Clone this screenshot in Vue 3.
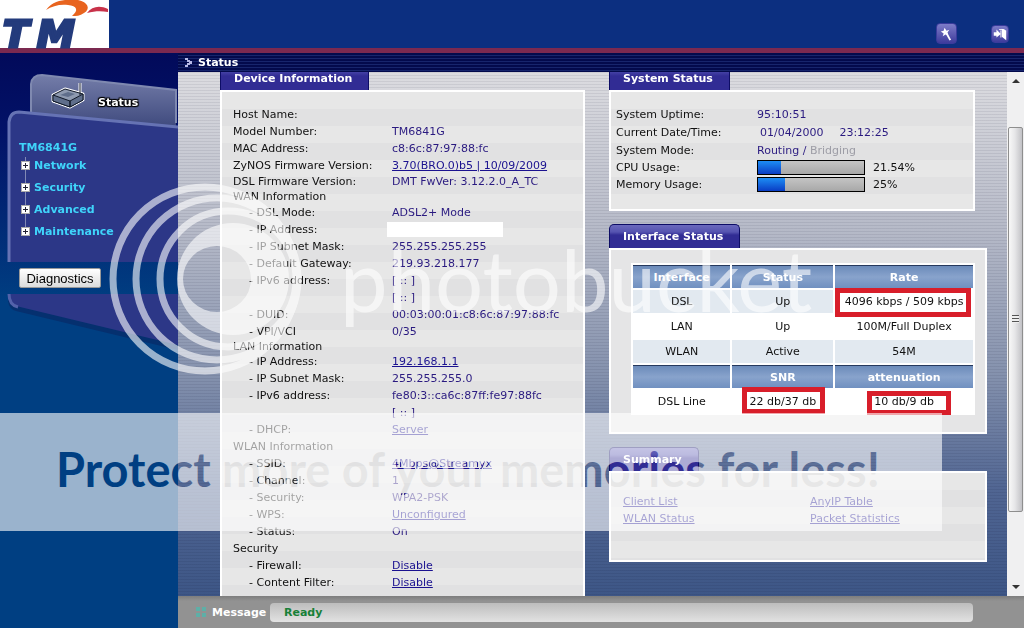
<script setup>
const menu = ['Network', 'Security', 'Advanced', 'Maintenance']

const device = [
  { label: 'Host Name:' },
  { label: 'Model Number:', value: 'TM6841G' },
  { label: 'MAC Address:', value: 'c8:6c:87:97:88:fc' },
  { label: 'ZyNOS Firmware Version:', value: '3.70(BRO.0)b5 | 10/09/2009', link: true },
  { label: 'DSL Firmware Version:', value: 'DMT FwVer: 3.12.2.0_A_TC', size: 'snug' },
  { label: 'WAN Information', size: 'snug' },
  { label: '- DSL Mode:', value: 'ADSL2+ Mode', sub: true },
  { label: '- IP Address:', sub: true, blank: true },
  { label: '- IP Subnet Mask:', value: '255.255.255.255', sub: true },
  { label: '- Default Gateway:', value: '219.93.218.177', sub: true },
  { label: '- IPv6 address:', value: '[ :: ]', sub: true },
  { label: '', value: '[ :: ]' },
  { label: '- DUID:', value: '00:03:00:01:c8:6c:87:97:88:fc', sub: true },
  { label: '- VPI/VCI', value: '0/35', sub: true },
  { label: 'LAN Information', size: 'tight' },
  { label: '- IP Address:', value: '192.168.1.1', link: true, sub: true },
  { label: '- IP Subnet Mask:', value: '255.255.255.0', sub: true },
  { label: '- IPv6 address:', value: 'fe80:3::ca6c:87ff:fe97:88fc', sub: true },
  { label: '', value: '[ :: ]' },
  { label: '- DHCP:', value: 'Server', link: true, sub: true },
  { label: 'WLAN Information' },
  { label: '- SSID:', value: '4Mbps@Streamyx', link: true, sub: true },
  { label: '- Channel:', value: '1', sub: true },
  { label: '- Security:', value: 'WPA2-PSK', sub: true },
  { label: '- WPS:', value: 'Unconfigured', link: true, sub: true },
  { label: '- Status:', value: 'On', sub: true },
  { label: 'Security' },
  { label: '- Firewall:', value: 'Disable', link: true, sub: true },
  { label: '- Content Filter:', value: 'Disable', link: true, sub: true },
]

const usage = [
  { label: 'CPU Usage:', percent: 21.54 },
  { label: 'Memory Usage:', percent: 25 },
]
</script>

<template>
  <div class="app">
    <header class="top">
      <svg class="logo" viewBox="0 0 109 48" role="img" aria-label="TM">
        <rect width="109" height="48" fill="#fff" />
        <path d="M46 10C52 2 60 0 68 0H78C88 2 91 9 84 13C80 16 76 16 72 16C79 10 77 6 68 5C60 4 52 6 46 10Z" fill="#e8641f" />
        <path d="M87 13C92 6 100 5 108 9L108 12C101 11 95 11 87 13Z" fill="#c8324a" />
        <g class="logo-text">
          <text x="3" y="47">T</text>
          <text x="37" y="47">M</text>
        </g>
      </svg>
      <div class="top-actions">
        <button type="button" class="icon-btn" aria-label="Wizard">
          <svg viewBox="0 0 20 20"><path d="M9 8L14 17" stroke="#fff" stroke-width="2" /><path d="M8 4L10 7L13 6L11 9L12 12L9 11L6 13L7 10L4 8L7 7Z" fill="#fff" /></svg>
        </button>
        <button type="button" class="icon-btn small" aria-label="Logout">
          <svg viewBox="0 0 18 18"><path d="M2 7H5V4L10 9L5 13V11H2Z" fill="#fff" /><path d="M8 4H14M10 5V13" stroke="#fff" fill="none" /><path d="M11 3L16 5V16L11 12Z" fill="#fff" /></svg>
        </button>
      </div>
    </header>

    <div class="body">
      <aside class="side">
        <svg class="side-art" viewBox="0 0 178 300" aria-hidden="true">
          <defs>
            <linearGradient id="tab" x1="0" y1="0" x2="0" y2="1">
              <stop offset="0" stop-color="#747da9" />
              <stop offset="1" stop-color="#3f4a7e" />
            </linearGradient>
          </defs>
          <path d="M31 64V31Q32 22 42 22L176 37V74Z" fill="url(#tab)" />
          <path d="M31 60V31Q32 22 42 22L176 37V70" fill="none" stroke="#7f89b0" stroke-width="2" />
          <path d="M8 209V69Q9 58 19 59L178 74V209Z" fill="#2c3787" />
          <path d="M9 209V69Q10 59 19 59L178 74" fill="none" stroke="#6673b4" stroke-width="3" />
          <path d="M10 241H178V297L16 258Q9 256 8 248Z" fill="#05306f" />
          <path d="M8 241H178V292L16 253Q9 251 8 241Z" fill="#2c3787" />
          <path d="M9 241Q9 252 18 254" fill="none" stroke="#5362aa" stroke-width="3" />
          <g stroke-linejoin="round">
            <path d="M53 42L65 36L83 41V47L70 54L53 48Z" fill="#7b89a5" stroke="#fff" stroke-width="3" />
            <path d="M80 30V42" stroke="#fff" stroke-width="3" />
            <path d="M53 42L65 36L83 41V47L70 54L53 48Z" fill="#8e9ab0" stroke="#101828" />
            <path d="M53 42L70 48V54L53 48ZM70 48L83 41V47L70 54Z" fill="#5f6e8b" stroke="#101828" />
            <path d="M60 42L68 39L75 41L68 44Z" fill="#5f6e8b" />
            <path d="M80 30V42" stroke="#101828" />
          </g>
        </svg>
        <h1 class="side-title">Status</h1>
        <nav class="menu">
          <a href="#" class="menu-root">TM6841G</a>
          <ul>
            <li v-for="item in menu" :key="item">
              <a href="#"><i class="plus"></i><span>{{ item }}</span></a>
            </li>
          </ul>
        </nav>
        <button type="button" class="diag">Diagnostics</button>
      </aside>

      <main class="main">
        <h2 class="bar">
          <svg viewBox="0 0 7 9" aria-hidden="true"><path d="M0 0H3V2H0ZM2 2H5V4H2ZM4 3H7V6H4ZM2 5H5V7H2ZM0 7H3V9H0Z" fill="#b7b9e6" /></svg>
          Status
        </h2>
        <div class="view">
          <div class="columns">
            <section class="card grow">
              <h3 class="tab cut">Device Information</h3>
              <div class="panel open">
                <table class="device">
                  <tbody>
                    <tr v-for="(row, i) in device" :key="i" :class="[row.size, { sub: row.sub }]">
                      <th scope="row">{{ row.label }}</th>
                      <td>
                        <a v-if="row.link" href="#">{{ row.value }}</a>
                        <span v-else-if="row.blank" class="blank"></span>
                        <template v-else>{{ row.value }}</template>
                      </td>
                    </tr>
                  </tbody>
                </table>
              </div>
            </section>

            <div class="right">
              <section class="card narrow">
                <h3 class="tab cut">System Status</h3>
                <div class="panel system">
                  <dl>
                    <dt>System Uptime:</dt><dd>95:10:51</dd>
                    <dt>Current Date/Time:</dt><dd class="date"><span>01/04/2000</span><span>23:12:25</span></dd>
                    <dt>System Mode:</dt><dd>Routing / <span class="off">Bridging</span></dd>
                    <template v-for="u in usage" :key="u.label">
                      <dt>{{ u.label }}</dt>
                      <dd class="usage"><span class="meter"><i :style="{ width: u.percent + '%' }"></i></span>{{ u.percent }}%</dd>
                    </template>
                  </dl>
                </div>
              </section>

              <section class="card">
                <h3 class="tab">Interface Status</h3>
                <div class="panel iface">
                  <table class="grid">
                    <colgroup><col class="c1"><col class="c2"><col class="c3"></colgroup>
                    <tbody>
                      <tr><th>Interface</th><th>Status</th><th>Rate</th></tr>
                      <tr class="alt"><td>DSL</td><td>Up</td><td class="clear">4096 kbps / 509 kbps<i class="mark rate"></i></td></tr>
                      <tr><td>LAN</td><td>Up</td><td>100M/Full Duplex</td></tr>
                      <tr class="alt"><td>WLAN</td><td>Active</td><td>54M</td></tr>
                      <tr><th></th><th>SNR</th><th>attenuation</th></tr>
                      <tr><td>DSL Line</td><td>22 db/37 db<i class="mark snr"></i></td><td>10 db/9 db<i class="mark att"></i></td></tr>
                    </tbody>
                  </table>
                </div>
              </section>

              <section class="card">
                <h3 class="tab">Summary</h3>
                <div class="panel summary">
                  <a href="#">Client List</a><a href="#">AnyIP Table</a>
                  <a href="#">WLAN Status</a><a href="#">Packet Statistics</a>
                </div>
              </section>
            </div>
          </div>
          <div class="scroll" aria-hidden="true">
            <i class="arrow up"></i>
            <div class="track"><div class="thumb"><i></i></div></div>
            <i class="arrow down"></i>
          </div>
        </div>
        <footer class="foot">
          <i class="dots"></i><strong>Message</strong><output>Ready</output>
        </footer>
      </main>
    </div>

    <div class="water">
      <svg class="rings" viewBox="0 0 200 200" aria-hidden="true">
        <g fill="none" stroke="#fff" stroke-width="7">
          <circle cx="100" cy="100" r="92" />
          <circle cx="112" cy="100" r="81" />
          <circle cx="123" cy="100" r="68" />
        </g>
        <path fill="#fff" fill-rule="evenodd" d="M72 100a56 56 0 1 0 112 0a56 56 0 1 0 -112 0ZM78 100a34 33 0 1 1 68 0a34 33 0 1 1 -68 0Z" />
      </svg>
      <span class="brand">photobucket</span>
    </div>
    <div class="banner">Protect more of your memories for less!</div>
  </div>
</template>

<style>
body { overflow: hidden; }
</style>

<style scoped>
.app {
  position: relative;
  display: flex;
  flex-direction: column;
  height: 100vh;
  overflow: hidden;
  font: 11px/17px "DejaVu Sans", Verdana, sans-serif;
  color: #111;
}
.app * { box-sizing: border-box; }
h1, h2, h3, ul, dl, dd { margin: 0; padding: 0; font-size: 11px; }
button { cursor: pointer; }

.top {
  display: flex;
  justify-content: space-between;
  flex: none;
  height: 53px;
  background: #0c2f80;
  border-bottom: 5px solid #7b2950;
}
.logo { width: 109px; height: 48px; overflow: visible; }
.logo-text { font: italic bold 38px "DejaVu Sans", sans-serif; fill: #233b7c; stroke: #233b7c; stroke-width: 3; }
.top-actions { display: flex; align-items: center; gap: 34px; padding: 19px 15px 0 0; }
.icon-btn {
  width: 21px;
  height: 21px;
  padding: 0;
  border: 1px solid #3a3b9c;
  border-radius: 4px;
  background: linear-gradient(#7d7cc8, #3e3b9c);
}
.icon-btn.small { width: 18px; height: 18px; }
.icon-btn svg { display: block; width: 100%; height: 100%; }

.body { display: flex; flex: 1; min-height: 0; }
.side {
  position: relative;
  flex: none;
  width: 178px;
  background: linear-gradient(#020a5a, #021268 80px, #003f82 250px);
}
.side-art { position: absolute; left: 0; top: 0; width: 178px; height: 300px; }
.side-title {
  position: relative;
  padding: 41px 0 0 98px;
  color: #fff;
  text-shadow: 1px 1px 1px #000, -1px -1px 1px #000, 1px -1px 1px #000, -1px 1px 1px #000;
}
.menu { position: relative; padding: 28px 0 0 19px; font-weight: bold; }
.menu a { color: #3fd4fa; text-decoration: none; }
.menu-root { display: block; line-height: 18px; }
.menu ul { list-style: none; background: linear-gradient(#8189b5, #8189b5) 6px 0 / 1px 72px no-repeat; }
.menu li { height: 22px; }
.menu li a { display: flex; align-items: center; height: 17px; }
.plus {
  position: relative;
  width: 9px;
  height: 9px;
  margin: 0 6px 0 2px;
  border: 1px solid #aaa;
  background: linear-gradient(#223, #223) center / 5px 1px no-repeat, linear-gradient(#223, #223) center / 1px 5px no-repeat, #fff;
}
.menu li span { margin-left: -2px; }
.diag {
  position: relative;
  margin: 23px 0 0 19px;
  width: 82px;
  height: 20px;
  padding: 0;
  border: 1px solid #999;
  border-radius: 2px;
  background: linear-gradient(#fff, #dcdcdc);
  font: 13px/17px "Liberation Sans", Arial, sans-serif;
  color: #000;
}

.main { display: flex; flex-direction: column; flex: 1; min-width: 0; }
.bar {
  display: flex;
  align-items: center;
  gap: 6px;
  flex: none;
  height: 19px;
  padding-left: 7px;
  color: #fff;
  background: repeating-linear-gradient(#030a4c 0 2px, #17256c 2px 3px);
}
.bar svg { width: 7px; height: 9px; }

.view {
  display: flex;
  flex: 1;
  min-height: 0;
  overflow: hidden;
  background:
    repeating-linear-gradient(rgba(0, 0, 30, .07) 0 1px, transparent 1px 3px),
    linear-gradient(#dcdce0, #b6bac8 30%, #8491ad 58%, #506592 80%, #3d5686);
}
.columns {
  display: grid;
  grid-template-columns: 365fr 378fr;
  gap: 24px;
  flex: 1;
  padding: 0 20px 0 42px;
}
.card { display: flex; flex-direction: column; align-items: flex-start; }
.right { display: flex; flex-direction: column; gap: 13px; }
.narrow { margin-right: 12px; }
.tab {
  height: 24px;
  padding: 0 16px 0 13px;
  border: 1px solid #0d0d66;
  border-bottom: 0;
  border-radius: 5px 5px 0 0;
  background: linear-gradient(#6a69bd, #5553b0 7px, #312c94 10px, #312c94);
  color: #fff;
  line-height: 23px;
}
.tab.cut { height: 18px; border-top: 0; border-radius: 0; line-height: 13px; background: linear-gradient(#4441a5, #312c94 4px); }
.panel {
  align-self: stretch;
  border: 2px solid #fff;
  background: repeating-linear-gradient(#e7e7e7 0 17px, #e1e1e2 17px 34px);
}
.grow .panel { flex: 1; }
.panel.open { border-bottom: 0; padding: 14px 0 0 11px; }
.device { border-collapse: collapse; table-layout: fixed; width: 100%; }
.device th { width: 159px; padding: 0; font-weight: normal; text-align: left; white-space: nowrap; }
.device td { padding: 0; color: #2a1a80; white-space: nowrap; }
.device tr { height: 17px; }
.device .snug { height: 15px; line-height: 15px; }
.device .tight { height: 13px; line-height: 13px; }
.device .sub th { padding-left: 16px; }
a { color: #1b1290; }
.blank { display: block; width: 116px; height: 15px; margin-left: -5px; background: #fff; }

.system { height: 121px; padding: 13px 5px 0; }
.system dl { display: grid; grid-template-columns: 141px 1fr; grid-template-rows: 18px 18px 18px 17px 17px; align-items: center; }
.system dd { color: #2a1a80; }
.system .date { display: flex; gap: 16px; padding-left: 3px; }
.system .off { color: #9d9da6; }
.system .usage { display: flex; align-items: center; gap: 8px; color: #111; }
.meter { width: 108px; height: 15px; border: 1px solid #000; background: linear-gradient(#c4c4c4, #a8a8a8); }
.meter i { display: block; height: 100%; background: linear-gradient(#1d8df4, #0a3dc4); }

.iface { padding: 13px 10px 17px 20px; background: #e5e5e6; }
.grid { width: 100%; table-layout: fixed; border-collapse: separate; border-spacing: 2px; background: #fff; text-align: center; }
.c1 { width: 29%; }
.c2 { width: 30%; }
.grid th, .grid td { position: relative; height: 23px; padding: 0; line-height: 21px; white-space: nowrap; }
.grid th { color: #fff; border-top: 1px solid #26395d; background: linear-gradient(#6c8bba, #88a3cc 50%, #7090c0); }
.alt td { background: #e2e9f0; }
.alt .clear { background: #fff; }
.mark { position: absolute; border: 5px solid #d81e2a; }
.rate { inset: -2px 2px -4px 0; }
.snr { inset: -3px 8px -1px 10px; }
.att { inset: 1px 22px -2px 32px; }

.summary { display: grid; grid-template-columns: 187px 1fr; align-content: start; min-height: 91px; padding: 20px 12px; }
.summary a { justify-self: start; }

.scroll { display: flex; flex-direction: column; align-items: center; flex: none; width: 17px; padding: 7px 0; background: #f0f0f1; }
.arrow { border: 4px solid transparent; }
.arrow.up { border-top: 0; border-bottom-color: #333; }
.arrow.down { border-bottom: 0; border-top-color: #333; }
.track { flex: 1; width: 15px; padding-top: 44px; }
.thumb {
  display: flex;
  align-items: center;
  justify-content: center;
  height: 84%;
  border: 1px solid #8e8e8e;
  border-radius: 2px;
  background: linear-gradient(90deg, #f8f8f8, #e6e6e8 45%, #c2c2c6);
}
.thumb i { width: 7px; height: 8px; background: repeating-linear-gradient(#555 0 1px, #eee 1px 3px); }

.foot {
  display: flex;
  align-items: center;
  flex: none;
  height: 32px;
  padding: 0 51px 0 18px;
  background: linear-gradient(#7d7d7d, #929292 5px);
  color: #fff;
}
.dots {
  width: 10px;
  height: 10px;
  margin-right: 6px;
  background: linear-gradient(#929292, #929292) center / 10px 2px no-repeat, repeating-linear-gradient(90deg, #5eafa7 0 4px, transparent 4px 6px);
}
.foot strong { width: 58px; }
.foot output {
  flex: 1;
  height: 19px;
  padding-left: 14px;
  border-radius: 4px;
  background: linear-gradient(#bdbdbd, #e2e2e2);
  color: #188038;
  font-weight: bold;
  line-height: 20px;
}

.water { position: absolute; left: 105px; top: 179px; display: flex; align-items: center; opacity: .6; pointer-events: none; }
.rings { width: 200px; height: 200px; }
.brand { margin-left: 35px; font: 85px/96px Lato, sans-serif; color: #fff; }
.banner {
  position: absolute;
  left: 0;
  top: 413px;
  width: 92%;
  height: 118px;
  padding-left: 56px;
  background: #9a9a9a;
  color: #000;
  font: bold 47px/112px Lato, sans-serif;
  white-space: nowrap;
  mix-blend-mode: screen;
  pointer-events: none;
}
</style>
